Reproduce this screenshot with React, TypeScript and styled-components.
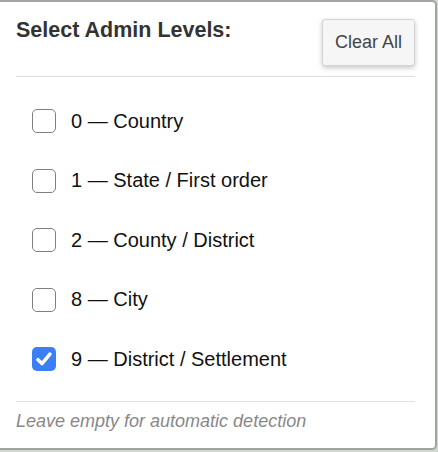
import { useState } from "react";
import styled, { createGlobalStyle } from "styled-components";

const GlobalStyle = createGlobalStyle`
  html, body {
    margin: 0;
    padding: 0;
    background: #cfd7d0;
    overflow: hidden;
  }
  body {
    font-family: "Liberation Sans", Arial, sans-serif;
  }
`;

const Panel = styled.div`
  box-sizing: border-box;
  width: 441px;
  height: 450px;
  margin-left: -4px;
  padding: 0 20px 0 18px;
  background: #fff;
  border: 2px solid #a3a3a3;
  border-radius: 5px;
  display: flex;
  flex-direction: column;
`;

const Header = styled.div`
  display: flex;
  justify-content: space-between;
  align-items: flex-start;
  margin-top: 15px;
  padding-bottom: 10px;
  border-bottom: 1px solid #dcdcdc;
`;

const Title = styled.h3`
  margin: 0;
  font-size: 21.5px;
  line-height: 26px;
  font-weight: 700;
  color: #333;
`;

const ClearButton = styled.button`
  box-sizing: border-box;
  width: 93px;
  height: 47px;
  margin-top: 2px;
  padding: 0;
  font-family: inherit;
  font-size: 18px;
  color: #444;
  background: #f6f6f6;
  border: 1px solid #d4d4d4;
  border-radius: 3px;
  box-shadow: 0 2px 5px rgba(0, 0, 0, 0.22);
  cursor: pointer;
`;

const List = styled.div`
  display: flex;
  flex-direction: column;
  gap: 35.5px;
  padding: 32px 0 30px 16px;
  border-bottom: 1px solid #e3e3e3;
`;

const Row = styled.label`
  display: flex;
  align-items: center;
  gap: 15px;
  height: 24px;
  cursor: pointer;
`;

const Box = styled.span<{ $checked: boolean }>`
  box-sizing: border-box;
  width: 24px;
  height: 24px;
  border-radius: 5px;
  border: ${({ $checked }) => ($checked ? "none" : "1.5px solid #7f7f7f")};
  background: ${({ $checked }) => ($checked ? "#3a7ff5" : "#fff")};
  display: flex;
  align-items: center;
  justify-content: center;
  flex-shrink: 0;
`;

const HiddenInput = styled.input`
  display: none;
`;

const Label = styled.span`
  font-size: 20px;
  color: #111;
`;

const Hint = styled.p`
  margin: 8px 0 0;
  font-size: 18px;
  line-height: 22px;
  font-style: italic;
  color: #888;
`;

const levels = [
  { id: 0, name: "Country" },
  { id: 1, name: "State / First order" },
  { id: 2, name: "County / District" },
  { id: 8, name: "City" },
  { id: 9, name: "District / Settlement" },
];

export default function App() {
  const [selected, setSelected] = useState<number[]>([9]);

  const toggle = (id: number) =>
    setSelected((s) => (s.includes(id) ? s.filter((x) => x !== id) : [...s, id]));

  return (
    <>
      <GlobalStyle />
      <Panel>
        <Header>
          <Title>Select Admin Levels:</Title>
          <ClearButton onClick={() => setSelected([])}>Clear All</ClearButton>
        </Header>
        <List>
          {levels.map((l) => {
            const checked = selected.includes(l.id);
            return (
              <Row key={l.id}>
                <HiddenInput
                  type="checkbox"
                  checked={checked}
                  onChange={() => toggle(l.id)}
                />
                <Box $checked={checked}>
                  {checked && (
                    <svg width="18" height="18" viewBox="0 0 16 16">
                      <path
                        d="M2.6 8.6 L6.2 12.1 L13.3 3.6"
                        fill="none"
                        stroke="#fff"
                        strokeWidth="3.1"
                        strokeLinecap="round"
                        strokeLinejoin="round"
                      />
                    </svg>
                  )}
                </Box>
                <Label>
                  {l.id} — {l.name}
                </Label>
              </Row>
            );
          })}
        </List>
        <Hint>Leave empty for automatic detection</Hint>
      </Panel>
    </>
  );
}
